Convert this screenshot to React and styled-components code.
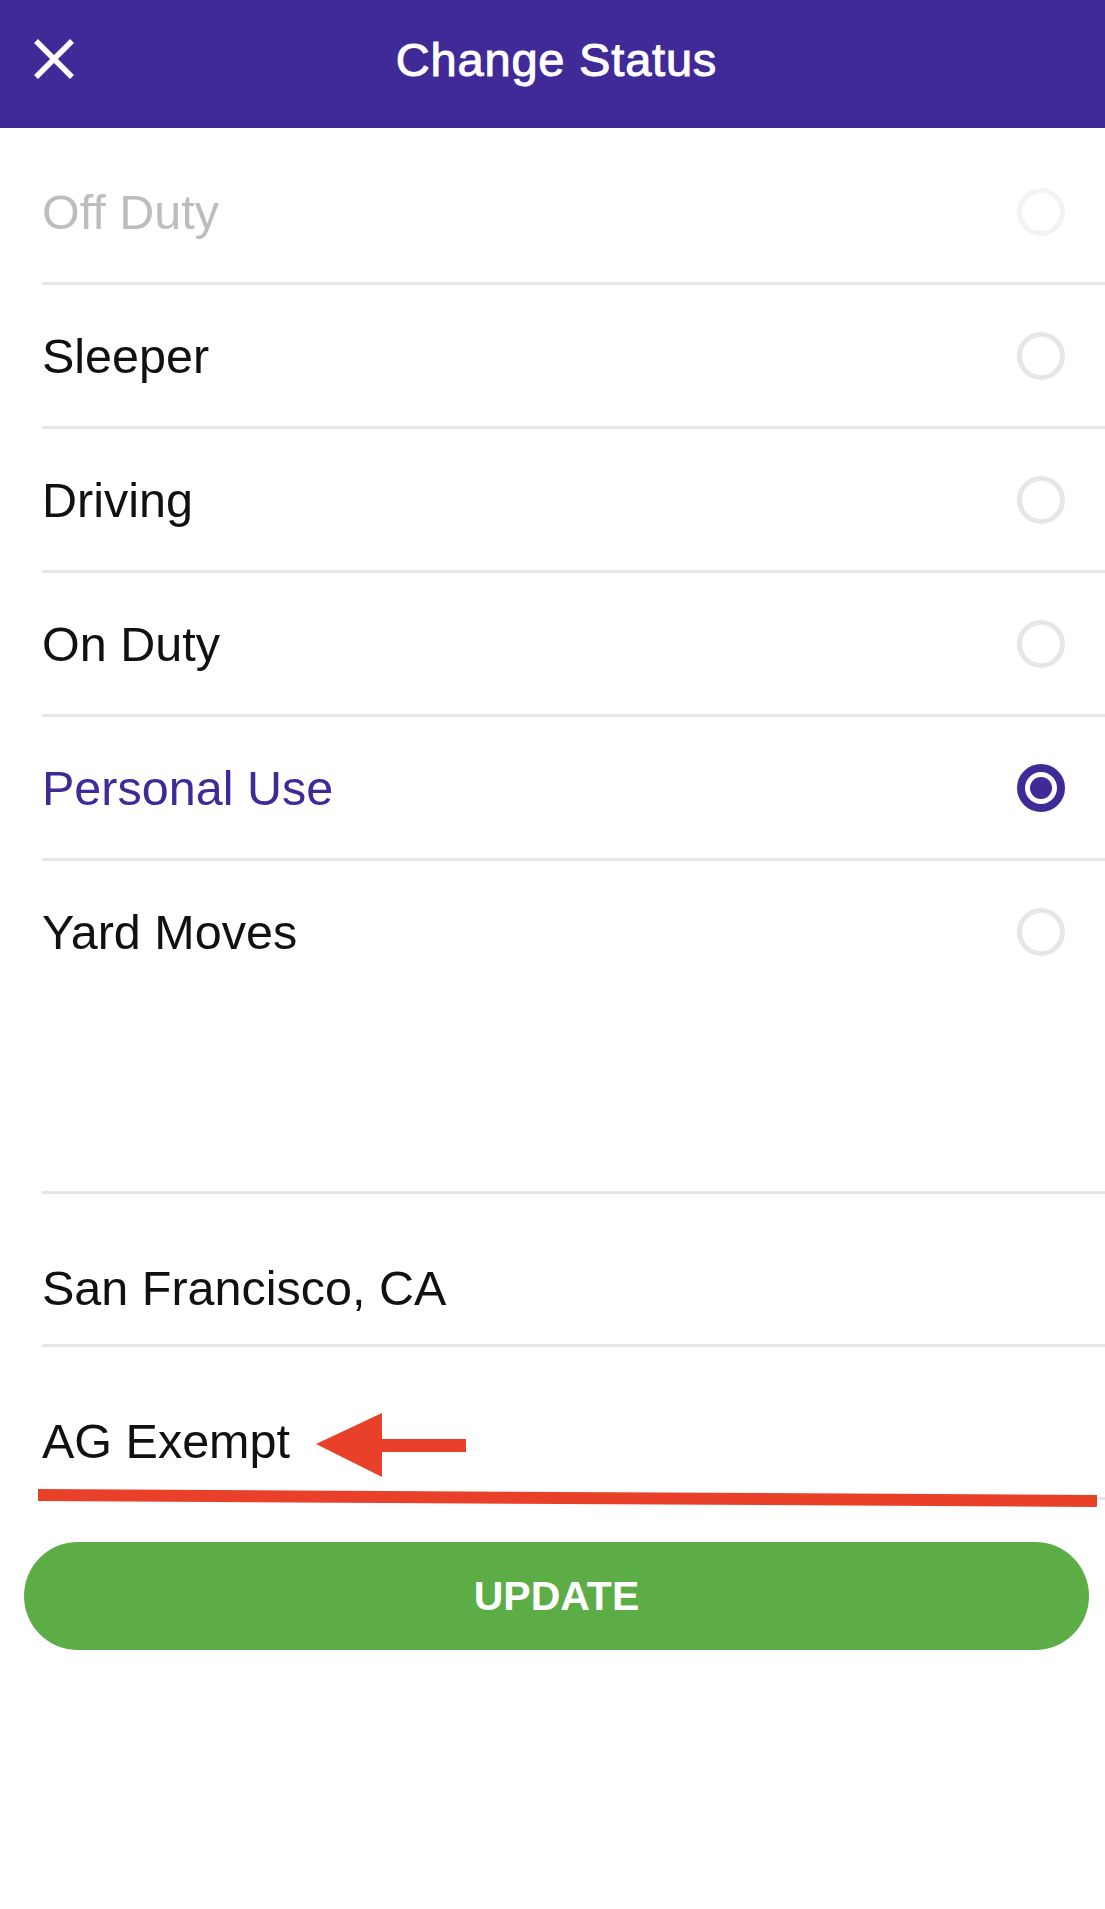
import styled, { createGlobalStyle } from "styled-components";

const GlobalStyle = createGlobalStyle`
  body {
    margin: 0;
    background: #fff;
    font-family: "Liberation Sans", Arial, sans-serif;
  }
`;

const PURPLE = "#3f2a98";

const Screen = styled.div`
  position: relative;
  min-height: 1909px;
  background: #fff;
`;

const Header = styled.header`
  height: 128px;
  box-sizing: border-box;
  background: ${PURPLE};
  display: grid;
  grid-template-columns: 1fr auto 1fr;
  align-items: center;
  padding: 0 25px 10px 33px;
`;

const CloseButton = styled.button`
  width: 42px;
  height: 42px;
  padding: 0;
  border: none;
  background: none;
  cursor: pointer;
  justify-self: start;

  svg {
    display: block;
  }
`;

const Title = styled.h1`
  margin: 0;
  color: #fff;
  font-size: 47px;
  font-weight: 400;
  letter-spacing: 0.8px;
  -webkit-text-stroke: 1px #fff;
  line-height: 1;
`;

const List = styled.div`
  padding-top: 13px;
`;

const Row = styled.label`
  display: flex;
  align-items: center;
  justify-content: space-between;
  height: ${(p) => (p.$last ? "141px" : "144px")};
  box-sizing: border-box;
  margin-left: 42px;
  padding-right: 40px;
  border-bottom: ${(p) => (p.$last ? "none" : "3px solid #e6e6e6")};
  cursor: pointer;
`;

const labelColors = { disabled: "#bdbdbd", off: "#111", on: PURPLE };

const Label = styled.span`
  font-size: 48.5px;
  color: ${(p) => labelColors[p.$state]};
`;

const Radio = styled.span`
  width: 48px;
  height: 48px;
  box-sizing: border-box;
  border-radius: 50%;
  display: flex;
  align-items: center;
  justify-content: center;
  border: ${(p) =>
    p.$state === "on"
      ? `8px solid ${PURPLE}`
      : p.$state === "disabled"
      ? "5px solid #f3f3f3"
      : "5px solid #e6e6e6"};

  &::after {
    content: "";
    display: ${(p) => (p.$state === "on" ? "block" : "none")};
    width: 22px;
    height: 22px;
    border-radius: 50%;
    background: ${PURPLE};
  }
`;

const Fields = styled.div`
  margin-top: 189px;
  margin-left: 42px;
  border-top: 3px solid #e6e6e6;
`;

const Field = styled.div`
  height: 153px;
  box-sizing: border-box;
  padding-top: 38px;
  display: flex;
  align-items: center;
  font-size: 48.5px;
  color: #111;
  border-bottom: 3px solid #e6e6e6;
`;

const UpdateButton = styled.button`
  display: block;
  width: calc(100% - 40px);
  height: 108px;
  margin: 42px 16px 0 24px;
  border: none;
  border-radius: 54px;
  background: #5cad46;
  color: #fff;
  font-family: "Liberation Sans", Arial, sans-serif;
  font-size: 41px;
  font-weight: 700;
  cursor: pointer;
`;

const Annotation = styled.svg`
  position: absolute;
  top: 1400px;
  left: 0;
  pointer-events: none;
`;

const statuses = [
  { name: "Off Duty", state: "disabled" },
  { name: "Sleeper", state: "off" },
  { name: "Driving", state: "off" },
  { name: "On Duty", state: "off" },
  { name: "Personal Use", state: "on" },
  { name: "Yard Moves", state: "off" },
];

export default function App() {
  return (
    <Screen>
      <GlobalStyle />
      <Header>
        <CloseButton aria-label="Close">
          <svg width="42" height="42" viewBox="0 0 42 42">
            <path
              d="M3 3 L39 39 M39 3 L3 39"
              stroke="#fff"
              strokeWidth="5.5"
              fill="none"
            />
          </svg>
        </CloseButton>
        <Title>Change Status</Title>
      </Header>

      <List>
        {statuses.map((s, i) => (
          <Row key={s.name} $last={i === statuses.length - 1}>
            <Label $state={s.state}>{s.name}</Label>
            <Radio $state={s.state} />
          </Row>
        ))}
      </List>

      <Fields>
        <Field>San Francisco, CA</Field>
        <Field>AG Exempt</Field>
      </Fields>

      <UpdateButton>UPDATE</UpdateButton>

      <Annotation width="1105" height="120" viewBox="0 0 1105 120">
        <path
          d="M316 44 L382 13 L382 39 L466 39 L466 52 L382 52 L382 77 Z"
          fill="#e94129"
        />
        <path d="M38 95 L1097 101" stroke="#e94129" strokeWidth="12" />
      </Annotation>
    </Screen>
  );
}
